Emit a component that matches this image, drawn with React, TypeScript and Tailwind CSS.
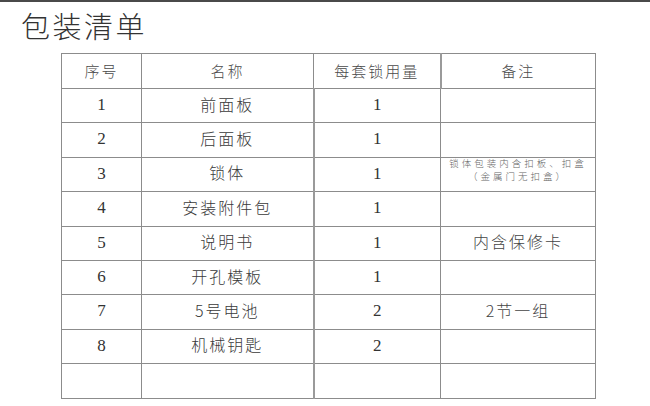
const rows: [string, string, string, React.ReactNode][] = [
  ["1", "前面板", "1", ""],
  ["2", "后面板", "1", ""],
  [
    "3",
    "锁体",
    "1",
    <div className="flex flex-col items-center text-[9.5px] leading-[13.5px] tracking-[3px] text-[#666] -mt-[4px]">
      <span>锁体包装内含扣板、扣盒</span>
      <span>（金属门无扣盒）</span>
    </div>,
  ],
  ["4", "安装附件包", "1", ""],
  ["5", "说明书", "1", "内含保修卡"],
  ["6", "开孔模板", "1", ""],
  ["7", "5号电池", "2", "2节一组"],
  ["8", "机械钥匙", "2", ""],
  ["", "", "", ""],
];

const cjk = "font-['Noto_Sans_CJK_SC',sans-serif]";
const num = "font-['Liberation_Serif','Noto_Sans_CJK_SC',serif]";

export default function App() {
  return (
    <div className="w-[650px] h-[406px] bg-white flex flex-col overflow-hidden">
      <div className="h-[2px] bg-[#4a4a4a]" />
      <h1
        className={`${cjk} font-light text-[29px] leading-[30px] tracking-[2.5px] text-[#333] ml-[21px] mt-[8px]`}
      >
        包装清单
      </h1>
      <table className="ml-[61px] mt-[13px] w-[534px] border-collapse table-fixed text-[#333]">
        <colgroup>
          <col className="w-[80px]" />
          <col className="w-[172px]" />
          <col className="w-[127px]" />
          <col className="w-[155px]" />
        </colgroup>
        <thead>
          <tr className="h-[35px]">
            <th className={`${cjk} font-light text-[15px] tracking-[2px] border border-[#8c8c8c] text-[#4a4a4a]`}>序号</th>
            <th className={`${cjk} font-light text-[15px] tracking-[2px] border border-[#8c8c8c] text-[#4a4a4a]`}>名称</th>
            <th className={`${cjk} font-light text-[15px] tracking-[2px] border border-[#8c8c8c] border-r-2 border-r-[#9a9a9a] text-[#4a4a4a]`}>每套锁用量</th>
            <th className={`${cjk} font-light text-[15px] tracking-[2px] border border-[#8c8c8c] text-[#4a4a4a]`}>备注</th>
          </tr>
        </thead>
        <tbody>
          {rows.map(([n, name, qty, note], i) => (
            <tr key={i} className="h-[34.4px]">
              <td className={`${num} text-[17px] text-center border border-[#8c8c8c] pb-[2px]`}>{n}</td>
              <td className={`${cjk} font-light text-[16px] tracking-[2px] text-center border border-[#8c8c8c] text-[#3a3a3a] pb-[4px]`}>{name}</td>
              <td className={`${num} text-[17px] text-center border border-[#8c8c8c] border-l-2 border-l-[#9a9a9a] pb-[2px]`}>{qty}</td>
              <td className={`${cjk} font-light text-[16px] tracking-[2px] text-center border border-[#8c8c8c] text-[#444] pb-[4px]`}>{note}</td>
            </tr>
          ))}
        </tbody>
      </table>
    </div>
  );
}
